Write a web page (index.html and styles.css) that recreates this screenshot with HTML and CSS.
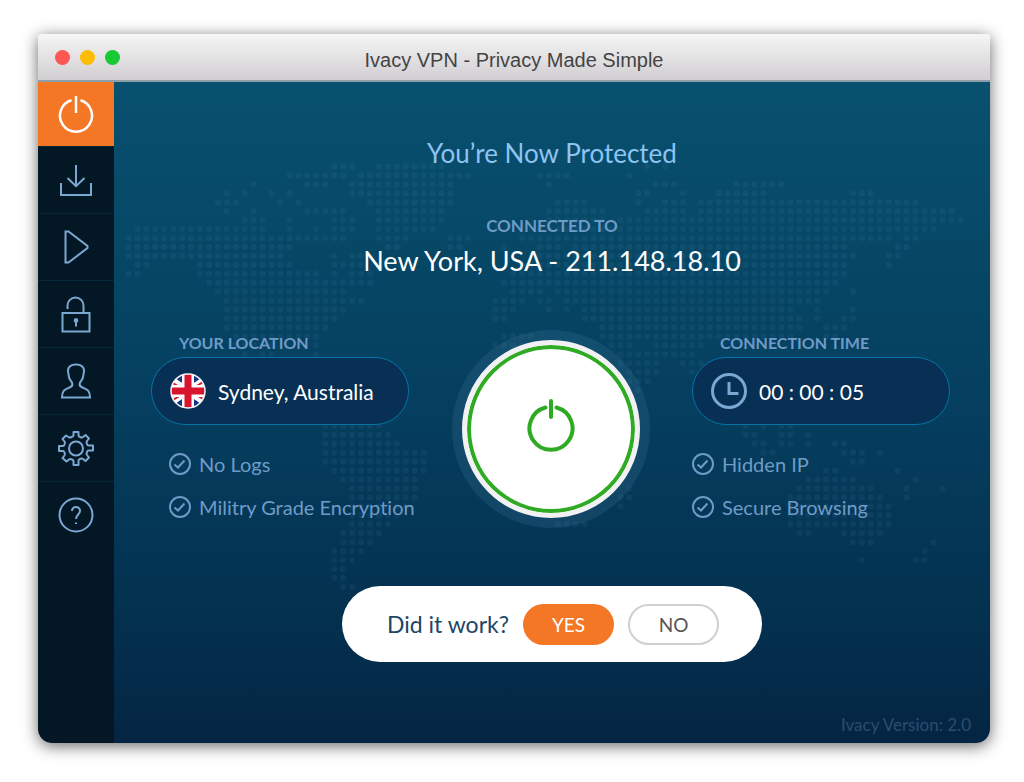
FILE: index.html
```html
<!DOCTYPE html>
<html lang="en">
<head>
    <meta charset="UTF-8">
    <meta name="viewport" content="width=device-width, initial-scale=1.0">
    <title>Ivacy VPN - Privacy Made Simple</title>
    <link rel="stylesheet" href="styles.css">
</head>
<body>

    <div class="window">
        <header class="titlebar">
            <div class="lights">
                <span class="light red"></span>
                <span class="light yellow"></span>
                <span class="light green"></span>
            </div>
            <h1>Ivacy VPN - Privacy Made Simple</h1>
        </header>

        <div class="content">
            <nav class="sidebar">
                <button type="button" class="nav-item active" aria-label="Connect">
                    <svg width="38" height="40" viewBox="0 0 38 40"><path d="M14.500 6.300a16 16 0 1 0 9 0M19 2v17"/></svg>
                </button>
                <button type="button" class="nav-item" aria-label="Download">
                    <svg width="34" height="34" viewBox="0 0 34 34"><path d="M17 2v21M8.500 15l8.500 8.200 8.500-8.200M2 20v12h30V20"/></svg>
                </button>
                <button type="button" class="nav-item" aria-label="Play">
                    <svg width="34" height="36" viewBox="0 0 34 36"><path d="M6.500 2.500h3L28.500 17v2L9.500 33.500h-3z"/></svg>
                </button>
                <button type="button" class="nav-item" aria-label="Security">
                    <svg width="34" height="38" viewBox="0 0 34 38"><path d="M3.500 18h27v18.500h-27zM8.500 14v-3.500a8 8 0 0 1 16 0V18"/><path class="solid" d="M17 23a2.500 2.500 0 0 1 1 4.700v3.800h-2v-3.800a2.500 2.500 0 0 1 1-4.700z"/></svg>
                </button>
                <button type="button" class="nav-item" aria-label="Account">
                    <svg width="34" height="38" viewBox="0 0 34 38"><path d="M17 2.500c-5 0-8 2-8 6.500 0 1.500.5 2 .5 3.500 0 4 1.500 5.500 3.500 8 .8 2 .5 3.500-1.500 4.500C6.500 27.500 3 27.500 3 35.500h28c0-8-3.500-8-8.500-10.500-2-1-2.300-2.500-1.500-4.500 2-2.500 3.500-4 3.500-8 0-1.500.5-2 .5-3.500 0-4.500-3-6.500-8-6.500z"/></svg>
                </button>
                <button type="button" class="nav-item" aria-label="Settings">
                    <svg width="38" height="38" viewBox="0 0 38 38"><path stroke-linejoin="round" d="M16.500 3h5v3.500q0 1 1.500 1.500 2 1 3 0l2.500-2 3.500 3.500-2 2.500q-1 1 0 3 .5 1.500 1.500 1.500H36v5h-4.500q-1 0-1.500 1.500-1 2 0 3l2 2.500-3.500 3.500-2.500-2q-1-1-3 0-1.500.5-1.500 1.500V36h-5v-4q0-1-1.500-1.500-2-1-3 0l-2.500 2L5.500 29l2-2.500q1-1 0-3Q7 22 6 22H2v-5h4q1 0 1.500-1.500 1-2 0-3l-2-2.500L9 6.500l2.500 1.500q1 1 3 0 2-.5 2-1.500z"/><circle cx="19" cy="19.500" r="7"/></svg>
                </button>
                <button type="button" class="nav-item" aria-label="Help">
                    <svg width="38" height="38" viewBox="0 0 38 38"><circle cx="19" cy="18" r="16.500"/><path d="M15 14c0-5.500 8-5.500 8 0 0 3.500-4 3.500-4 8M19 25.500v1.500"/></svg>
                </button>
            </nav>

            <main class="main">
                <!-- dotted world map, one unit per dot -->
                <svg class="map" viewBox="-.5 -.5 95 48" aria-hidden="true">
                    <path d="M23 0h2.100M28 0h7.100M58 0h.1M60 0h.1
                        M18 1h6.100M26 1h12.100M46 1h3.100M56 1h.1
                        M14 2h.1M20 2h2.100M25 2h11.100M47 2h.1M59 2h2.100M68 2h5.100
                        M11 3h.1M13 3h.1M16 3h.1M18 3h.1M25 3h11.100M57 3h1.100M62 3h.1M66 3h5.100M81 3h2.100
                        M10 4h2.100M17 4h.1M19 4h.1M27 4h9.100M48 4h3.100M57 4h.1M60 4h2.100M64 4h24.100
                        M11 5h.1M14 5h.1M20 5h4.100M28 5h7.100M47 5h6.100M58 5h4.100M64 5h28.100
                        M13 6h2.100M18 6h.1M23 6h2.100M28 6h7.100M47 6h6.100M55 6h38.100
                        M1 7h14.100M18 7h.1M21 7h.1M23 7h2.100M28 7h6.100M46 7h44.100
                        M0 8h24.100M28 8h3.100M36 8h2.100M44 8h41.100M87 8h1.100
                        M0 9h18.100M29 9h1.100M36 9h1.100M42 9h.1M46 9h2.100M50 9h30.100M86 9h1.100
                        M0 10h17.100M23 10h.1M25 10h1.100M46 10h35.100M85 10h1.100
                        M1 11h1.100M8 11h10.100M23 11h3.100M44 11h36.100M85 11h.1
                        M0 12h1.100M8 12h13.100M23 12h.1M25 12h2.100M43 12h37.100
                        M9 13h18.100M42 13h37.100
                        M10 14h14.100M43 14h3.100M48 14h30.100M81 14h.1
                        M11 15h15.100M41 15h3.100M46 15h1.100M49 15h28.100
                        M11 16h13.100M41 16h2.100M47 16h.1M49 16h.1M51 16h23.100M77 16h.1M81 16h.1
                        M11 17h12.100M41 17h1.100M51 17h24.100M77 17h.1M80 17h1.100
                        M11 18h11.100M53 18h22.100M78 18h2.100
                        M12 19h9.100M42 19h3.100M53 19h21.100M78 19h1.100
                        M12 20h4.100M21 20h.1M41 20h3.100M54 20h2.100M59 20h5.100
                        M13 21h.1M15 21h1.100M21 21h.1M55 21h8.100
                        M55 22h4.100M62 22h2.100M56 23h3.100M63 23h.1M56 24h2.100M57 25h.1
                        M22 29h6.100M69 29h.1M71 29h.1M73 29h1.100
                        M22 30h7.100M69 30h1.100M73 30h1.100M76 30h.1
                        M22 31h8.100M70 31h1.100M73 31h1.100M76 31h.1M79 31h1.100
                        M22 32h11.100M71 32h1.100M80 32h2.100M84 32h.1
                        M22 33h11.100M81 33h1.100
                        M23 34h10.100M78 34h1.100M86 34h.1
                        M24 35h8.100M76 35h5.100M88 35h.1
                        M25 36h7.100M56 36h.1M75 36h8.100M87 36h.1M91 36h.1
                        M25 37h7.100M55 37h1.100M74 37h10.100M87 37h.1
                        M25 38h6.100M55 38h.1M74 38h11.100
                        M25 39h5.100M74 39h11.100
                        M25 40h4.100M48 40h3.100M74 40h11.100
                        M24 41h4.100M75 41h1.100M80 41h4.100
                        M24 42h3.100M81 42h2.100M90 42h.1
                        M23 43h3.100M89 43h.1
                        M23 44h2.100M82 44h.1M88 44h1.100
                        M23 45h1.100M23 46h1.100M24 47h1.100"/>
                </svg>

                <h2 class="headline">You’re Now Protected</h2>
                <p class="connected-label">CONNECTED TO</p>
                <p class="connected-place">New York, USA - 211.148.18.10</p>

                <div class="status">
                    <section class="side location">
                        <h3>YOUR LOCATION</h3>
                        <div class="pill">
                            <svg width="36" height="36" viewBox="0 0 36 36">
                                <clipPath id="round"><circle cx="18" cy="18" r="17"/></clipPath>
                                <g clip-path="url(#round)">
                                    <path fill="#16358a" d="M0 0h36v36H0z"/>
                                    <path stroke="#fff" stroke-width="7" d="M-3 4l42 28M-3 32L39 4"/>
                                    <path stroke="#d8142f" stroke-width="2" d="M-2 7l13 8M25 21l13 8M-2 30l13-8M25 14l13-8"/>
                                    <path stroke="#fff" stroke-width="12" d="M18 0v36M0 18h36"/>
                                    <path stroke="#d8142f" stroke-width="7" d="M18 0v36M0 18h36"/>
                                </g>
                                <circle cx="18" cy="18" r="17" fill="none" stroke="#f4f4f8" stroke-width="1.500"/>
                            </svg>
                            <span>Sydney, Australia</span>
                        </div>
                        <ul>
                            <li><svg class="check" width="22" height="22" viewBox="0 0 22 22"><circle cx="11" cy="11" r="10"/><path d="M5.500 11.500l3.500 3 6.500-7"/></svg>No Logs</li>
                            <li><svg class="check" width="22" height="22" viewBox="0 0 22 22"><circle cx="11" cy="11" r="10"/><path d="M5.500 11.500l3.500 3 6.500-7"/></svg>Militry Grade Encryption</li>
                        </ul>
                    </section>

                    <button type="button" class="power" aria-label="Disconnect">
                        <svg width="50" height="56" viewBox="0 0 50 56"><path d="M19.500 10.500a21.500 21.500 0 1 0 11 0M25 4v16"/></svg>
                    </button>

                    <section class="side time">
                        <h3>CONNECTION TIME</h3>
                        <div class="pill">
                            <svg class="clock" width="36" height="36" viewBox="0 0 36 36"><circle cx="18" cy="18" r="16.500"/><path d="M18 9v11.500h9.500"/></svg>
                            <span>00 : 00 : 05</span>
                        </div>
                        <ul>
                            <li><svg class="check" width="22" height="22" viewBox="0 0 22 22"><circle cx="11" cy="11" r="10"/><path d="M5.500 11.500l3.500 3 6.500-7"/></svg>Hidden IP</li>
                            <li><svg class="check" width="22" height="22" viewBox="0 0 22 22"><circle cx="11" cy="11" r="10"/><path d="M5.500 11.500l3.500 3 6.500-7"/></svg>Secure Browsing</li>
                        </ul>
                    </section>
                </div>

                <div class="feedback">
                    <p>Did it work?</p>
                    <button type="button" class="yes">YES</button>
                    <button type="button" class="no">NO</button>
                </div>

                <p class="version">Ivacy Version: 2.0</p>
            </main>
        </div>
    </div>

</body>
</html>
```

FILE: styles.css
```css
* {
    box-sizing: border-box;
}
body {
    margin: 0;
    min-height: 100vh;
    padding: 34px 34px 39px 38px;
    display: flex;
    background-color: white;
    font-family: Lato, "Open Sans", sans-serif;
    font-variant-ligatures: none;
}
h1, h2, h3, p, ul {
    margin: 0;
    padding: 0;
    font-weight: 400;
}
button {
    font-family: inherit;
    padding: 0;
    border: none;
    cursor: pointer;
}
svg {
    fill: none;
    flex-shrink: 0;
}
.window {
    flex: 1;
    display: flex;
    flex-direction: column;
    border-radius: 4px 4px 14px 14px;
    overflow: hidden;
    box-shadow: 0 3px 16px rgba(0,0,0,0.6);
}

/* title bar */
.titlebar {
    display: grid;
    grid-template-columns: 100px 1fr 100px;
    align-items: center;
    height: 48px;
    border-bottom: 2px solid #8d9fa9;
    background: linear-gradient(#f6f6f6, #d1ced1);
}
.lights {
    display: flex;
    gap: 10px;
    padding-left: 17px;
}
.light {
    width: 15px;
    height: 15px;
    border-radius: 50%;
}
.red {
    background-color: #fc5753;
}
.yellow {
    background-color: #fdbc06;
}
.green {
    background-color: #19c934;
}
.titlebar h1 {
    padding-top: 6px;
    text-align: center;
    font-family: "Liberation Sans", Arial, sans-serif;
    font-size: 20px;
    color: #444;
}

.content {
    flex: 1;
    display: flex;
}

/* sidebar */
.sidebar {
    width: 76px;
    background-color: #041725;
}
.nav-item {
    display: flex;
    align-items: center;
    justify-content: center;
    width: 100%;
    height: 67px;
    background: none;
    border-bottom: 1px solid #06283a;
}
.nav-item:last-child {
    border-bottom: none;
}
.nav-item svg {
    stroke: #7ba8d2;
    stroke-width: 2;
}
.nav-item .solid {
    fill: #7ba8d2;
    stroke: none;
}
.nav-item.active {
    height: 65px;
    background-color: #f47725;
}
.nav-item.active svg {
    stroke: white;
    stroke-width: 2.5;
}

/* main panel */
.main {
    position: relative;
    flex: 1;
    display: flex;
    flex-direction: column;
    align-items: center;
    padding: 55px 0 8px;
    background: linear-gradient(#08516f, #053e5e 50%, #04304f 82%, #042543);
}
.map {
    position: absolute;
    top: 80px;
    left: 10px;
    width: 97%;
    stroke: #6fa0c8;
    stroke-opacity: 0.08;
    stroke-width: 0.7;
    stroke-linecap: round;
    stroke-dasharray: 0 1;
}
.headline {
    font-size: 26px;
    line-height: 32px;
    color: #8fc3f2;
}
.connected-label {
    margin-top: 47px;
    font-size: 17px;
    font-weight: 700;
    line-height: 20px;
    color: #6f9bc8;
}
.connected-place {
    margin-top: 8px;
    font-size: 27px;
    line-height: 34px;
    color: white;
}

.status {
    position: relative;
    align-self: stretch;
    display: flex;
    justify-content: space-between;
    margin-top: 52px;
    padding: 0 40px 0 37px;
}
.side {
    width: 258px;
    padding-top: 3px;
}
.side h3 {
    margin-bottom: 4px;
    padding-left: 28px;
    font-size: 16px;
    font-weight: 700;
    line-height: 20px;
    color: #6f9bc8;
}
.pill {
    display: flex;
    align-items: center;
    gap: 12px;
    height: 68px;
    padding: 0 18px;
    border: 1px solid #0474a6;
    border-radius: 34px;
    background-color: #082f54;
    font-size: 21px;
    color: white;
}
.clock {
    stroke: #7ba8d2;
    stroke-width: 3;
}
.side ul {
    display: flex;
    flex-direction: column;
    gap: 19px;
    padding: 27px 0 0 18px;
    list-style: none;
}
.time ul {
    padding-left: 0;
}
.side li {
    display: flex;
    align-items: center;
    gap: 8px;
    font-size: 20px;
    line-height: 24px;
    color: #6f9bc8;
    white-space: nowrap;
}
.check {
    stroke: #6f9bc8;
    stroke-width: 2;
}

.power {
    display: flex;
    align-items: center;
    justify-content: center;
    width: 178px;
    height: 178px;
    margin: 10px;
    padding-bottom: 9px;
    border: 5px solid #f1f1f4;
    border-radius: 50%;
    background-color: white;
    box-shadow: inset 0 0 0 4px #2fab23, 0 0 0 10px rgba(70,125,160,0.22);
}
.power svg {
    stroke: #2fab23;
    stroke-width: 4;
    stroke-linecap: round;
}

/* feedback bar */
.feedback {
    position: relative;
    display: flex;
    align-items: center;
    gap: 14px;
    height: 76px;
    margin-top: 58px;
    padding: 0 43px 0 45px;
    border-radius: 38px;
    background-color: white;
}
.feedback p {
    font-size: 23px;
    color: #1d4565;
}
.feedback button {
    width: 91px;
    height: 41px;
    border-radius: 21px;
    font-size: 19px;
}
.yes {
    background-color: #f47725;
    color: white;
}
.feedback .no {
    border: 2px solid #cfcfcf;
    background-color: white;
    color: #555;
}
.version {
    align-self: flex-end;
    margin-top: auto;
    padding-right: 19px;
    font-size: 17px;
    line-height: 20px;
    color: #2b4d6d;
}
```
